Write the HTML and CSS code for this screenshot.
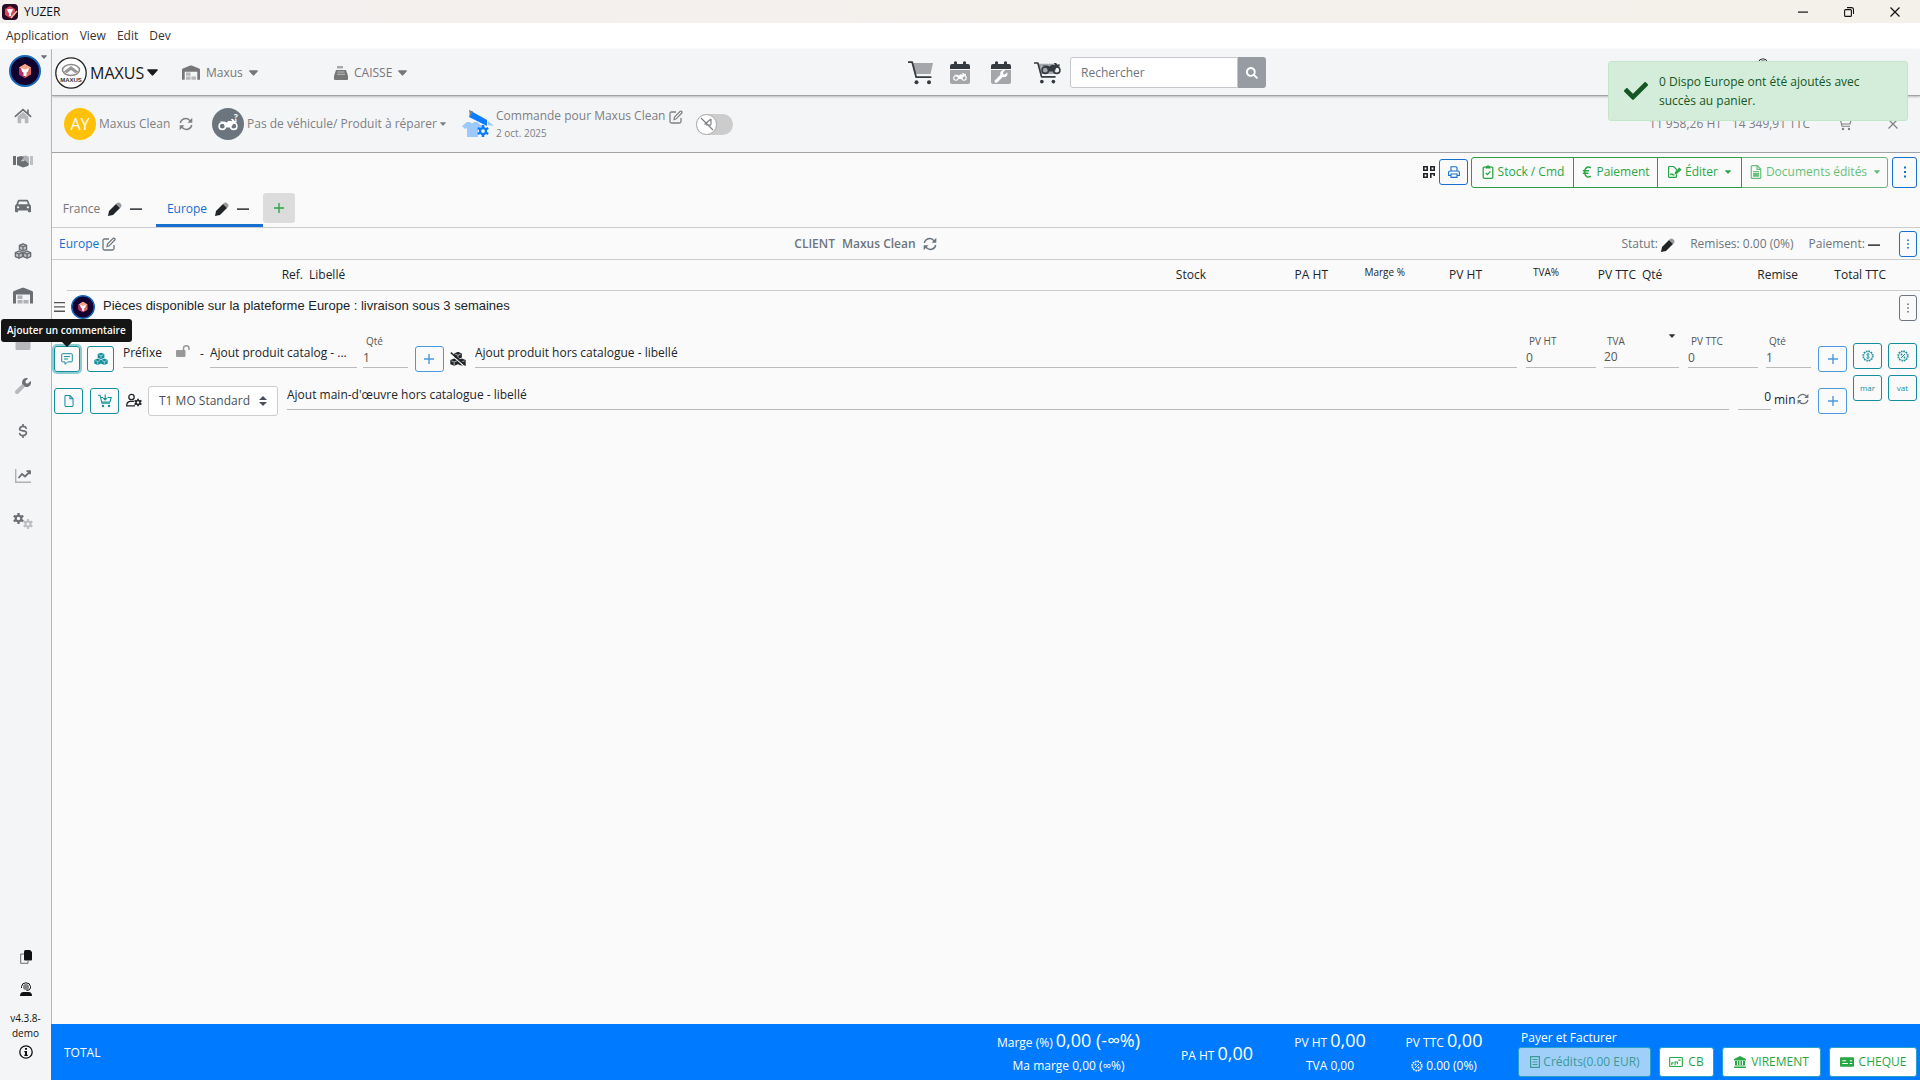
FILE: index.html
```html
<!DOCTYPE html>
<html lang="fr">
<head>
<meta charset="utf-8">
<title>YUZER</title>
<link rel="stylesheet" href="styles.css">
</head>
<body>
<svg class="sprite" aria-hidden="true">
  <symbol id="i-caret" viewBox="0 0 10 6"><path d="M.8 0h8.400q1 .4.400 1.200L5.700 5.600q-.7.600-1.400 0L.4 1.200Q-.1.400.8 0z"/></symbol>
  <symbol id="i-brand" viewBox="0 0 32 32"><circle cx="16" cy="16" r="15" fill="#12002e" stroke="#1668b8" stroke-width="2"/><path d="M16 9l6 3.500v7L16 23l-6-3.500v-7z" fill="#e0655f"/><path d="M16 9l6 3.500-6 3.500-6-3.500z" fill="#f3a48a"/><path d="M10 12.500l6 3.500v7l-6-3.500z" fill="#b03068"/><path d="M12 13l4 1.500 4-1.500-1 3.500-1.500 1V21h-3v-3.500l-1.500-1z" fill="#fff"/></symbol>
  <symbol id="i-app" viewBox="0 0 16 16"><rect width="16" height="16" rx="4" fill="#2a0a22"/><path d="M8 2l5 3v6l-5 3-5-3V5z" fill="#d8475c"/><path d="M5 5h6l-1 3-1 1v3H7V9L6 8z" fill="#fff"/><path d="M9 14l6-7" stroke="#f3c0a8" stroke-width="1.500"/></symbol>
  <symbol id="i-home" viewBox="0 0 20 18"><path d="M4 9.500l6-5 6 5V16q0 1-1 1h-3v-5H8v5H5q-1 0-1-1z" opacity=".45"/><path d="M1.500 9.500L10 2l8.500 7.500M15.500 2.500v4" fill="none" stroke="currentColor" stroke-width="1.800" stroke-linecap="round"/></symbol>
  <symbol id="i-hands" viewBox="0 0 20 14"><path d="M0 2h3v9H0z"/><path d="M17 2h3v9h-3z" opacity=".4"/><path d="M4 3l4-1 3 1-3 4q2 1 4-1l4 4-1 2-5 1.500L4 11z"/><path d="M10 2l3-.5 3 1.500v7l-4-4-3 1-1-1z" opacity=".5"/></symbol>
  <symbol id="i-car" viewBox="0 0 18 16"><path d="M4.500 1h9q1 0 1.500 1l1.500 4Q18 7 18 8v6q0 1-1 1h-1.500q-1 0-1-1v-1h-11v1q0 1-1 1H1q-1 0-1-1V8q0-1 1.500-2L3 2q.5-1 1.500-1zM4.700 3L3.500 6h11l-1.200-3z" fill-rule="evenodd"/><circle cx="3.500" cy="9.500" r="1.300" fill="#f4f5f7"/><circle cx="14.500" cy="9.500" r="1.300" fill="#f4f5f7"/></symbol>
  <symbol id="i-cubes" viewBox="0 0 20 18"><g stroke="currentColor" stroke-width="1.500" stroke-linejoin="round"><path d="M10 1l4 1.800v4.400L10 9 6 7.200V2.800zM5.500 9l4 1.800v4.400L5.500 17l-4-1.800v-4.400zM14.500 9l4 1.800v4.400l-4 1.800-4-1.800v-4.400z" fill-opacity=".35"/><path d="M6 2.800l4 1.700 4-1.700M10 4.500V9M1.500 10.800l4 1.700 4-1.700M5.500 12.500V17M10.500 10.800l4 1.700 4-1.700M14.500 12.500V17" fill="none"/></g></symbol>
  <symbol id="i-cubesolid" viewBox="0 0 20 18"><path d="M10 0l4.800 2v5.200L10 9.200l-4.800-2V2zM5.200 8.300l4.800 2v5.200l-4.800 2-4.800-2v-5.200zM14.800 8.300l4.800 2v5.200l-4.800 2-4.800-2v-5.200z"/><path d="M6.500 2.900l3.500 1.500 3.500-1.500M1.800 11.300l3.400 1.500 3.500-1.500M11.300 11.300l3.500 1.500 3.400-1.500M10 4.400v3.800M5.200 13v4M14.800 13v4" fill="none" stroke="#fafafa" stroke-width=".8"/></symbol>
  <symbol id="i-cubesoff" viewBox="0 0 20 18"><use href="#i-cubesolid"/><path d="M0 2.500L18.500 18.500" stroke="#fafafa" stroke-width="1.400"/><path d="M1 1l18.500 16" stroke="currentColor" stroke-width="1.800"/></symbol>
  <symbol id="i-ware" viewBox="0 0 20 17"><path d="M0 16V5q0-1 1-1.400L9.200.3q.8-.3 1.600 0L19 3.600q1 .4 1 1.400v11h-3V7H3v9z"/><path d="M4.500 8h5v3.500h-5zM4.500 12.500h5V16h-5zM10.500 12.500h5V16h-5z" opacity=".5"/></symbol>
  <symbol id="i-clip" viewBox="0 0 16 18"><path d="M2 2h12q1.500 0 1.500 1.500v13q0 1.500-1.500 1.500H2Q.5 18 .5 16.500v-13Q.5 2 2 2z" opacity=".45"/><path d="M5 0h6v4H5z"/></symbol>
  <symbol id="i-wrench" viewBox="0 0 512 512"><path d="M507.730 109.100c-2.240-9.030-13.540-12.090-20.120-5.510l-74.360 74.360-67.880-11.310-11.310-67.880 74.360-74.360c6.620-6.620 3.430-17.900-5.660-20.160-47.380-11.740-99.550.910-136.580 37.930-39.640 39.640-50.550 97.100-34.050 147.200L18.740 402.760c-24.990 24.990-24.990 65.510 0 90.500 24.990 24.990 65.510 24.990 90.500 0l213.210-213.210c50.120 16.710 107.470 5.680 147.370-34.220 37.070-37.070 49.700-89.320 37.910-136.730z"/></symbol>
  <symbol id="i-wrench2" viewBox="0 0 512 512"><path d="M230 191L18.740 402.760c-24.990 24.990-24.990 65.510 0 90.500s65.510 24.990 90.500 0L320 282z" opacity=".45"/><path d="M507.730 109.100c-2.240-9.030-13.540-12.090-20.120-5.510l-74.360 74.360-67.880-11.310-11.310-67.880 74.360-74.360c6.620-6.620 3.430-17.900-5.660-20.160-47.380-11.740-99.550.910-136.580 37.930-39.640 39.640-50.550 97.100-34.050 147.200l92 90c50.120 16.710 107.470 5.680 147.370-34.220 37.070-37.070 49.700-89.320 37.910-136.730z"/></symbol>
  <symbol id="i-dollar" viewBox="0 0 10 16"><path d="M8.700 4.800Q8 2.800 5 2.800T1.300 5.200 5 7.900t3.800 2.700T5 13.200 1.200 11M5 .5v2.300M5 13.200v2.300" fill="none" stroke="currentColor" stroke-width="1.900" stroke-linecap="round"/></symbol>
  <symbol id="i-chart" viewBox="0 0 16 14"><path d="M.7 0v13.300H16" fill="none" stroke="currentColor" stroke-width="1.400" opacity=".5"/><path d="M3.500 9l3.500-4 3 2.500L15 2.500M11.500 2.200H15v3" fill="none" stroke="currentColor" stroke-width="1.800"/></symbol>
  <symbol id="i-gear" viewBox="0 0 16 16"><path d="M8 4a4 4 0 1 1 0 8 4 4 0 0 1 0-8z" fill="none" stroke="currentColor" stroke-width="3"/><path d="M8 0v4M8 12v4M1.100 4l3.400 2M11.500 10l3.400 2M1.100 12l3.400-2M11.500 6l3.400-2" stroke="currentColor" stroke-width="3.400"/></symbol>
  <symbol id="i-gears" viewBox="0 0 20 16"><use href="#i-gear" width="11" height="11"/><use href="#i-gear" x="10" y="6" width="10" height="10" opacity=".4"/></symbol>
  <symbol id="i-copy" viewBox="0 0 12 14"><path d="M4 4H.7v9.300H8V11" fill="none" stroke="currentColor" stroke-width="1" opacity=".6"/><path d="M5.500 0H10l2 2v7.500q0 1-1 1H5q-1 0-1-1v-8Q4 0 5.500 0z"/></symbol>
  <symbol id="i-agent" viewBox="0 0 12 14"><path d="M0 14q0-4 3.500-4h5Q12 10 12 14z"/><circle cx="6" cy="5" r="3" opacity=".5"/><path d="M1.500 6V4.500Q2 .8 6 .8t4.500 3.700V6Q10 8.500 6.500 8.500" fill="none" stroke="currentColor" stroke-width="1"/></symbol>
  <symbol id="i-info" viewBox="0 0 14 14"><circle cx="7" cy="7" r="6.200" fill="none" stroke="currentColor" stroke-width="1.300"/><path d="M6 3h2v1.800H6zM5.300 6H8v3.700h.8V11H5.300V9.700H6V7.300h-.7z"/></symbol>
  <symbol id="i-register" viewBox="0 0 14 14"><path d="M3 0h6v2.500H3z" opacity=".6"/><path d="M2 4h10l2 6v3q0 1-1 1H1q-1 0-1-1v-3z"/><path d="M3.500 6h7M3 8.300h8" stroke="#f4f5f7" stroke-width=".8" opacity=".7"/></symbol>
  <symbol id="i-cart" viewBox="0 0 26 24"><path d="M5 2h20l-2.500 11H7.500z" opacity=".42"/><path d="M.5 1.200h3.700l4 15h14.500" fill="none" stroke="currentColor" stroke-width="1.800" stroke-linecap="round" stroke-linejoin="round"/><circle cx="8.500" cy="21.300" r="2"/><circle cx="21" cy="21.300" r="2"/></symbol>
  <symbol id="i-calw" viewBox="0 0 20 24"><path d="M0 9h20v12q0 2-2 2H2q-2 0-2-2z" opacity=".42"/><path d="M0 8V5q0-2 2-2h2V1q1.500-1.500 3 0v2h6V1q1.500-1.500 3 0v2h2q2 0 2 2v3z"/></symbol>
  <symbol id="i-moto" viewBox="0 0 28 18"><circle cx="6" cy="12" r="4.500" fill="none" stroke="currentColor" stroke-width="2.200"/><circle cx="22" cy="12" r="4.500" fill="none" stroke="currentColor" stroke-width="2.200"/><path d="M2 5.500h7l3 1.500 3-2.500 5 .5-2-3h3l2 2.500 3-1v3.500l-4 1-4 6h-7l-2-4-3-2z"/></symbol>
  <symbol id="i-search" viewBox="0 0 512 512"><path d="M505 442.700L405.300 343c-4.500-4.500-10.600-7-17-7H372c27.600-35.300 44-79.700 44-128C416 93.100 322.900 0 208 0S0 93.100 0 208s93.100 208 208 208c48.300 0 92.700-16.400 128-44v16.300c0 6.400 2.500 12.500 7 17l99.700 99.700c9.400 9.400 24.600 9.400 33.900 0l28.300-28.300c9.400-9.400 9.400-24.600.100-34zM208 336c-70.700 0-128-57.200-128-128 0-70.700 57.200-128 128-128 70.700 0 128 57.200 128 128 0 70.700-57.200 128-128 128z"/></symbol>
  <symbol id="i-sync" viewBox="0 0 14 14"><path d="M1.300 6Q2 2.200 6.500 1.500q3-.2 5 2.800M12.700 8q-.7 3.800-5.200 4.500-3 .2-5-2.800" fill="none" stroke="currentColor" stroke-width="1.500"/><path d="M13.300.8v5H8.600zM.7 13.200v-5h4.700z"/></symbol>
  <symbol id="i-edit" viewBox="0 0 14 14"><path d="M7 2H2.500Q1 2 1 3.500v8Q1 13 2.500 13h8q1.500 0 1.500-1.500V8" fill="none" stroke="currentColor" stroke-width="1.300"/><path d="M5 9.500l.5-2.500 5.700-5.700q.8-.5 1.500.2t.1 1.500L7.200 8.800z" fill="none" stroke="currentColor" stroke-width="1.200"/></symbol>
  <symbol id="i-pen" viewBox="0 0 14 14"><path d="M0 14l1-5L8 2l4 4-7 7z"/><path d="M8.700 1.300Q10.500-.4 12.500 1.500t.3 3.800L12 6 8 2z" opacity=".45"/></symbol>
  <symbol id="i-order" viewBox="0 0 32 28"><path d="M9 1l16 9v6L7 7z" fill="#0a7cff"/><path d="M7 0l4 1.500L8 7z" fill="#79838c"/><path d="M26 11l6 5-6-1z" fill="#9cc8fb"/><path d="M5 12h3q2 2.500 4 0h3l5 4-2 3-2-1v9H5v-9l-2 1-3-3z" fill="#9cc8fb"/><g color="#0a7cff"><use href="#i-gear" x="15" y="15" width="12" height="12"/></g></symbol>
  <symbol id="i-noplane" viewBox="0 0 14 14"><path d="M1 1l12 12M11 2L4.500 7.500M11 2v5.500M6 8h5" fill="none" stroke="currentColor" stroke-width="1.200"/></symbol>
  <symbol id="i-check" viewBox="0 0 512 512"><path d="M173.898 439.404l-166.400-166.400c-9.997-9.997-9.997-26.206 0-36.204l36.203-36.204c9.997-9.998 26.207-9.998 36.204 0L192 312.690 432.095 72.596c9.997-9.997 26.207-9.997 36.204 0l36.203 36.204c9.997 9.997 9.997 26.206 0 36.204l-294.400 294.401c-9.998 9.997-26.207 9.997-36.204-.001z"/></symbol>
  <symbol id="i-qr" viewBox="0 0 12 12"><path d="M.8.800h3.400v3.400H.8zM7.800.8h3.400v3.400H7.800zM.8 7.800h3.400v3.400H.8zM7.800 12V7.800h3.400V10" fill="none" stroke="currentColor" stroke-width="1.600"/></symbol>
  <symbol id="i-print" viewBox="0 0 12 12"><path d="M3 5V.7h5L9 1.700V5M2.500 9.500H.6V6.500Q.6 5 2 5h8q1.400 0 1.400 1.500v3H9.500M3 8h6v3.400H3z" fill="none" stroke="currentColor" stroke-width="1.100"/></symbol>
  <symbol id="i-clipcheck" viewBox="0 0 11 14"><path d="M3 2.200H1.800Q.7 2.200.7 3.300v9q0 1 1.100 1h7.400q1.100 0 1.100-1v-9q0-1.100-1.100-1.100H8M3.300 8l1.600 1.600 3-3.200" fill="none" stroke="currentColor" stroke-width="1.300"/><path d="M3 1h1.500q1-1.500 2 0H8v2.500H3z"/></symbol>
  <symbol id="i-euro" viewBox="0 0 9 12"><path d="M8.300 1.800Q6.500.5 4.500 1.300 2.200 2.500 2.200 6t2.300 4.700q2 .8 3.800-.5M.3 4.700h6.200M.3 7.200h5.600" fill="none" stroke="currentColor" stroke-width="1.500"/></symbol>
  <symbol id="i-sign" viewBox="0 0 15 13"><path d="M9 9v2.300q0 1-1 1H1.600q-1 0-1-1V1.600q0-1 1-1H6L9 3.500V5M2.500 9.500q1.500-2 2.500 0h2" fill="none" stroke="currentColor" stroke-width="1.300"/><path d="M7 9l.5-2.500 4.700-4.700L14.500 4 9.700 8.500z"/></symbol>
  <symbol id="i-doc" viewBox="0 0 10 13"><path d="M1.500.6H6.300L9.400 3.700v7.800q0 .9-.9.900h-7q-.9 0-.9-.9v-10q0-.9.9-.9zM6 .6V4h3.400" fill="none" stroke="currentColor" stroke-width="1.100"/><path d="M2.300 5.500h5.400v1.200H2.300zM2.300 7.500h5.400V11H2.300z"/></symbol>
  <symbol id="i-dots" viewBox="0 0 3 12"><path d="M.5.500h2v2h-2zM.5 5h2v2h-2zM.5 9.500h2v2h-2z"/></symbol>
  <symbol id="i-minus" viewBox="0 0 10 10"><path d="M0 4.500h10v1.200H0z"/></symbol>
  <symbol id="i-plus" viewBox="0 0 10 10"><path d="M4.300 0h1.400v4.300H10v1.400H5.700V10H4.300V5.700H0V4.300h4.300z"/></symbol>
  <symbol id="i-bars" viewBox="0 0 11 10"><path d="M0 0h11v1.300H0zM0 4.300h11v1.300H0zM0 8.600h11v1.300H0z"/></symbol>
  <symbol id="i-comment" viewBox="0 0 12 12"><path d="M1.500.7h9q.8 0 .8.800v6.600q0 .8-.8.800H6.800L4 11.300V8.900H1.500q-.8 0-.8-.8V1.500q0-.8.800-.8zM3 3.600h6M3 6h4" fill="none" stroke="currentColor" stroke-width="1"/></symbol>
  <symbol id="i-unlock" viewBox="0 0 14 12"><rect y="5" width="9.500" height="7" rx="1"/><path d="M7.500 5V3q.3-2.200 2.800-2.200T13 3v2" fill="none" stroke="currentColor" stroke-width="1.500"/></symbol>
  <symbol id="i-file" viewBox="0 0 10 13"><path d="M1.500.6H6L9.400 4v7.500q0 .9-.9.900h-7q-.9 0-.9-.9v-10q0-.9.900-.9zM6 .6V4h3.400" fill="none" stroke="currentColor" stroke-width="1.100"/></symbol>
  <symbol id="i-cartadd" viewBox="0 0 14 13"><path d="M0 .7h2l2 8h8M3 3h2M9.500 3h3.700L12 7.500H4M7.200 0v5M5.300 3.500L7.200 5.500 9 3.500" fill="none" stroke="currentColor" stroke-width="1.100"/><circle cx="5" cy="11.500" r="1.200"/><circle cx="11" cy="11.500" r="1.200"/></symbol>
  <symbol id="i-cartline" viewBox="0 0 14 13"><path d="M0 .7h2l2 8h8M3 2h10.200L12 6.500H4" fill="none" stroke="currentColor" stroke-width="1.100"/><circle cx="5" cy="11.500" r="1.200"/><circle cx="11" cy="11.500" r="1.200"/></symbol>
  <symbol id="i-usergear" viewBox="0 0 16 13"><circle cx="5.500" cy="3.500" r="2.700" fill="none" stroke="currentColor" stroke-width="1.300"/><path d="M8 7.800H4Q.7 8.300.7 12.300H9" fill="none" stroke="currentColor" stroke-width="1.300"/><use href="#i-gear" x="8" y="5" width="8" height="8"/></symbol>
  <symbol id="i-sort" viewBox="0 0 8 10"><path d="M4 0l4 4H0zM4 10L0 6h8z"/></symbol>
  <symbol id="i-badge" viewBox="0 0 12 12"><circle cx="6" cy="6" r="5" fill="none" stroke="currentColor" stroke-width="1.300" stroke-dasharray="1.500 1.100"/><circle cx="6" cy="6" r="4.300" fill="none" stroke="currentColor" stroke-width=".6"/></symbol>
  <symbol id="i-bdollar" viewBox="0 0 12 12"><use href="#i-badge"/><path d="M7.500 4.500Q6.500 3.500 5.300 4t0 1.700l1.500.6q1 1-.2 1.800T4.300 7.600M6 3v6" fill="none" stroke="currentColor" stroke-width=".8"/></symbol>
  <symbol id="i-bpercent" viewBox="0 0 12 12"><use href="#i-badge"/><path d="M4 8l4-4" stroke="currentColor"/><circle cx="4.500" cy="4.500" r=".9"/><circle cx="7.500" cy="7.500" r=".9"/></symbol>
  <symbol id="i-receipt" viewBox="0 0 10 12"><path d="M.6.600h8.800v10.800H.6zM2.500 3.500h5M2.500 6h5M2.500 8.500h5" fill="none" stroke="currentColor" stroke-width="1.200"/></symbol>
  <symbol id="i-card" viewBox="0 0 15 11"><path d="M1.500.7h12q.8 0 .8.800v8q0 .8-.8.800h-12q-.8 0-.8-.8v-8q0-.8.800-.8zM3 9V6.500h2M6.500 9V5.500H9V8M10 3.500h2.500" fill="none" stroke="currentColor" stroke-width="1.200"/></symbol>
  <symbol id="i-bank" viewBox="0 0 12 12"><path d="M6 0l6 3v1.500H0V3zM1 5h2v4H1zM4 5h1.500v4H4zM6.500 5H8v4H6.500zM9 5h2v4H9zM.5 9.500h11V10.500H.5zM0 11h12v1H0z"/></symbol>
  <symbol id="i-cheque" viewBox="0 0 15 10"><path fill-rule="evenodd" d="M1 0h13q1 0 1 1v8q0 1-1 1H1Q0 10 0 9V1q0-1 1-1zm1.500 3v1.200h4V3zm0 3v1.200h6V6zm8-3v1.200h2.500V3zm0 3v1.200h2.500V6z"/></symbol>
  <symbol id="i-close" viewBox="0 0 10 10"><path d="M.5.500l9 9M9.500.5l-9 9" stroke="currentColor" stroke-width="1.200"/></symbol>
  <symbol id="i-restore" viewBox="0 0 10 10"><path d="M.6 3.600q0-1 1-1h4.800q1 0 1 1v4.800q0 1-1 1H1.600q-1 0-1-1zM3 .6h4.500q2 0 2 2V7" fill="none" stroke="currentColor" stroke-width="1.100"/></symbol>
</svg>

<header class="titlebar">
  <svg class="ic s16"><use href="#i-app"/></svg>
  <span class="titlebar-name">YUZER</span>
  <div class="winctl">
    <button aria-label="Réduire"><svg class="ic s10"><use href="#i-minus"/></svg></button>
    <button aria-label="Restaurer"><svg class="ic s10"><use href="#i-restore"/></svg></button>
    <button aria-label="Fermer"><svg class="ic s10"><use href="#i-close"/></svg></button>
  </div>
</header>
<nav class="menubar">
  <a href="#">Application</a><a href="#">View</a><a href="#">Edit</a><a href="#">Dev</a>
</nav>

<div class="app">
  <aside class="sidebar">
    <button class="brand" aria-label="Menu"><svg class="ic s32"><use href="#i-brand"/></svg><svg class="ic tiny"><use href="#i-caret"/></svg></button>
    <nav class="sidenav">
      <a href="#" aria-label="Accueil"><svg class="ic s18"><use href="#i-home"/></svg></a>
      <a href="#" aria-label="Clients"><svg class="ic s20"><use href="#i-hands"/></svg></a>
      <a href="#" aria-label="Véhicules"><svg class="ic s16"><use href="#i-car"/></svg></a>
      <a href="#" aria-label="Produits"><svg class="ic s18"><use href="#i-cubes"/></svg></a>
      <a href="#" aria-label="Dépôt"><svg class="ic s20"><use href="#i-ware"/></svg></a>
      <a href="#" aria-label="Commandes"><svg class="ic s18"><use href="#i-clip"/></svg></a>
      <a href="#" aria-label="Atelier"><svg class="ic s16"><use href="#i-wrench2"/></svg></a>
      <a href="#" aria-label="Ventes"><svg class="ic s14"><use href="#i-dollar"/></svg></a>
      <a href="#" aria-label="Statistiques"><svg class="ic s16"><use href="#i-chart"/></svg></a>
      <a href="#" aria-label="Réglages"><svg class="ic s20"><use href="#i-gears"/></svg></a>
    </nav>
    <div class="sidefoot">
      <svg class="ic s14"><use href="#i-copy"/></svg>
      <svg class="ic s14"><use href="#i-agent"/></svg>
      <div class="version">v4.3.8-<br>demo</div>
      <svg class="ic s14"><use href="#i-info"/></svg>
    </div>
  </aside>

  <div class="content">
    <div class="topbar">
      <button class="shop"><svg class="ic s32" viewBox="0 0 32 32"><circle cx="16" cy="16" r="15.200" fill="#fff" stroke="#222" stroke-width="1.300"/><ellipse cx="16" cy="13" rx="8.500" ry="5.500" fill="none" stroke="#888" stroke-width="1.500"/><path d="M8 15l8-6 8 6-4 1-4-3-4 3z" fill="#999"/><text x="16" y="25" text-anchor="middle" class="maxus-word">MAXUS</text></svg><span>MAXUS</span><svg class="ic caret12"><use href="#i-caret"/></svg></button>
      <button class="place"><svg class="ic s18"><use href="#i-ware"/></svg><span>Maxus</span><svg class="ic caret9"><use href="#i-caret"/></svg></button>
      <button class="till"><svg class="ic s14"><use href="#i-register"/></svg><span>CAISSE</span><svg class="ic caret9"><use href="#i-caret"/></svg></button>
      <div class="quick">
        <svg class="ic s26"><use href="#i-cart"/></svg>
        <span class="stack"><svg class="ic cal"><use href="#i-calw"/></svg><svg class="ic mark"><use href="#i-moto"/></svg></span>
        <span class="stack"><svg class="ic cal"><use href="#i-calw"/></svg><svg class="ic mark"><use href="#i-wrench"/></svg></span>
        <span class="stack bike"><svg class="ic s24"><use href="#i-cart"/></svg><svg class="ic rider"><use href="#i-moto"/></svg></span>
        <form class="search"><input type="text" placeholder="Rechercher" aria-label="Rechercher"><button type="button" aria-label="Chercher"><svg class="ic s12"><use href="#i-search"/></svg></button></form>
      </div>
      <svg class="ic s14 support"><use href="#i-agent"/></svg>
    </div>

    <div class="orderbar">
      <div class="client"><span class="avatar">AY</span><span>Maxus Clean</span><svg class="ic s14"><use href="#i-sync"/></svg></div>
      <div class="vehicle"><span class="avatar gray"><svg class="ic s20"><use href="#i-moto"/></svg><b>?</b></span><span>Pas de véhicule/ Produit à réparer</span><svg class="ic tiny"><use href="#i-caret"/></svg></div>
      <div class="order"><svg class="ic s32"><use href="#i-order"/></svg><div><div class="order-name">Commande pour Maxus Clean <svg class="ic s14"><use href="#i-edit"/></svg></div><div class="order-date">2 oct. 2025</div></div></div>
      <label class="switch"><input type="checkbox" aria-label="Mode livraison"><span><svg class="ic s14"><use href="#i-noplane"/></svg></span></label>
      <div class="sums"><span>11 958,26 HT</span><span>14 349,91 TTC</span><svg class="ic s14"><use href="#i-cartline"/></svg><svg class="ic s10"><use href="#i-close"/></svg></div>
    </div>

    <main>
      <div class="actions">
        <svg class="ic s12 dark"><use href="#i-qr"/></svg>
        <button class="btn blue small" aria-label="Imprimer"><svg class="ic s12"><use href="#i-print"/></svg></button>
        <div class="group">
          <button class="a1"><svg class="ic s14"><use href="#i-clipcheck"/></svg>Stock / Cmd</button>
          <button class="a2"><svg class="ic s12"><use href="#i-euro"/></svg>Paiement</button>
          <button class="a3"><svg class="ic s14"><use href="#i-sign"/></svg>Éditer<svg class="ic tiny"><use href="#i-caret"/></svg></button>
          <button class="a4"><svg class="ic s14"><use href="#i-doc"/></svg>Documents édités<svg class="ic tiny"><use href="#i-caret"/></svg></button>
        </div>
        <button class="btn blue tall" aria-label="Plus"><svg class="ic s12"><use href="#i-dots"/></svg></button>
      </div>

      <div class="tabs">
        <button class="tab"><span>France</span><svg class="ic s14"><use href="#i-pen"/></svg><svg class="ic s12"><use href="#i-minus"/></svg></button>
        <button class="tab active"><span>Europe</span><svg class="ic s14"><use href="#i-pen"/></svg><svg class="ic s12"><use href="#i-minus"/></svg></button>
        <button class="addtab" aria-label="Ajouter un onglet"><svg class="ic s10"><use href="#i-plus"/></svg></button>
      </div>

      <div class="inforow">
        <div class="sheet"><a href="#">Europe</a><svg class="ic s14"><use href="#i-edit"/></svg></div>
        <div class="cust"><b>CLIENT</b><b>Maxus Clean</b><svg class="ic s14"><use href="#i-sync"/></svg></div>
        <div class="status"><span>Statut: <svg class="ic s14 dark"><use href="#i-pen"/></svg></span><span>Remises: 0.00 (0%)</span><span>Paiement: <svg class="ic s12 dark"><use href="#i-minus"/></svg></span><button class="btn blue slim" aria-label="Plus"><svg class="ic s10"><use href="#i-dots"/></svg></button></div>
      </div>

      <table class="lines">
        <thead><tr>
          <th class="c-ref">Ref.</th><th class="left">Libellé</th><th class="c-100">Stock</th><th class="c-122">PA HT</th><th class="c-77 sub">Marge %</th><th class="c-77">PV HT</th><th class="c-77 sub">TVA%</th><th class="c-77">PV TTC</th><th class="c-77 left">Qté</th><th class="c-85">Remise</th><th class="c-119">Total TTC</th>
        </tr></thead>
      </table>

      <div class="note"><svg class="ic bars"><use href="#i-bars"/></svg><svg class="ic s24"><use href="#i-brand"/></svg><p>Pièces disponible sur la plateforme Europe : livraison sous 3 semaines</p><button class="btn grayb slim" aria-label="Plus"><svg class="ic s10"><use href="#i-dots"/></svg></button></div>

      <div class="entry">
        <div class="forms">
          <div class="row">
            <span class="tipwrap"><button class="btn teal w26 focus" aria-describedby="tip"><svg class="ic s12"><use href="#i-comment"/></svg></button><span class="tip" id="tip" role="tooltip">Ajouter un commentaire</span></span>
            <button class="btn teal w27" aria-label="Produits"><svg class="ic s14"><use href="#i-cubesolid"/></svg></button>
            <input class="field f-prefix" placeholder="Préfixe" aria-label="Préfixe">
            <svg class="ic s14 lock"><use href="#i-unlock"/></svg>
            <span class="dash">-</span>
            <input class="field f-cat" placeholder="Ajout produit catalog - ..." aria-label="Ajout produit catalogue">
            <label class="num n46"><span>Qté</span><input value="1"></label>
            <button class="btn sky w29" aria-label="Ajouter"><svg class="ic s10"><use href="#i-plus"/></svg></button>
            <svg class="ic s16 dark slash"><use href="#i-cubesoff"/></svg>
            <input class="field grow" placeholder="Ajout produit hors catalogue - libellé" aria-label="Libellé">
            <label class="num n70"><span>PV HT</span><input value="0"></label>
            <label class="num n75"><span>TVA <svg class="ic tiny"><use href="#i-caret"/></svg></span><select><option>20</option></select></label>
            <label class="num n70"><span>PV TTC</span><input value="0"></label>
            <label class="num n46"><span>Qté</span><input value="1"></label>
            <button class="btn sky w29" aria-label="Ajouter"><svg class="ic s10"><use href="#i-plus"/></svg></button>
          </div>
          <div class="row two">
            <button class="btn teal w29" aria-label="Document"><svg class="ic s12"><use href="#i-file"/></svg></button>
            <button class="btn teal w29" aria-label="Panier"><svg class="ic s14"><use href="#i-cartadd"/></svg></button>
            <svg class="ic s16 dark mid"><use href="#i-usergear"/></svg>
            <span class="pick"><select aria-label="Taux"><option>T1 MO Standard</option></select><svg class="ic s10"><use href="#i-sort"/></svg></span>
            <input class="field grow" placeholder="Ajout main-d'œuvre hors catalogue - libellé" aria-label="Main-d'œuvre">
            <span class="mins"><input class="field" value="0" aria-label="Minutes"><span>min</span><svg class="ic s12"><use href="#i-sync"/></svg></span>
            <button class="btn sky w29" aria-label="Ajouter"><svg class="ic s10"><use href="#i-plus"/></svg></button>
          </div>
        </div>
        <div class="quad">
          <button class="btn teal" aria-label="Montant"><svg class="ic s12"><use href="#i-bdollar"/></svg></button>
          <button class="btn teal" aria-label="Pourcentage"><svg class="ic s12"><use href="#i-bpercent"/></svg></button>
          <button class="btn teal">mar</button>
          <button class="btn teal">vat</button>
        </div>
      </div>
    </main>

    <footer class="totals">
      <span class="total-name">TOTAL</span>
      <div class="sum t1"><div>Marge (%) <big>0,00 (-∞%)</big></div><div>Ma marge 0,00 (∞%)</div></div>
      <div class="sum t2"><div>PA HT <big>0,00</big></div></div>
      <div class="sum t3"><div>PV HT <big>0,00</big></div><div>TVA 0,00</div></div>
      <div class="sum t4"><div>PV TTC <big>0,00</big></div><div><svg class="ic s12"><use href="#i-bpercent"/></svg> 0.00 (0%)</div></div>
      <div class="pay">
        <div>Payer et Facturer</div>
        <div class="paybtns">
          <button class="p1" disabled><svg class="ic s12"><use href="#i-receipt"/></svg>Crédits(0.00 EUR)</button>
          <button class="p2"><svg class="ic s14"><use href="#i-card"/></svg>CB</button>
          <button class="p3"><svg class="ic s12"><use href="#i-bank"/></svg>VIREMENT</button>
          <button class="p4"><svg class="ic s14"><use href="#i-cheque"/></svg>CHEQUE</button>
        </div>
      </div>
    </footer>
  </div>
</div>

<div class="toast" role="status"><svg class="ic s24"><use href="#i-check"/></svg><p>0 Dispo Europe ont été ajoutés avec succès au panier.</p></div>
</body>
</html>
```
FILE: styles.css
```css
* { box-sizing: border-box; }
body {
  margin: 0;
  min-height: 100vh;
  display: flex;
  flex-direction: column;
  font: 12px/18px "Open Sans", "Noto Sans", sans-serif;
  color: #212529;
  background: #fafafa;
}
button, input, select { font: inherit; color: inherit; }
button { margin: 0; padding: 0; border: 0; background: none; display: flex; align-items: center; justify-content: center; white-space: nowrap; }
input, select { min-width: 0; padding: 0; border: 0; border-radius: 0; background: none; appearance: none; }
input::placeholder { color: inherit; opacity: 1; }
p { margin: 0; }
a { color: inherit; text-decoration: none; }
.sprite { position: absolute; width: 0; height: 0; }
.maxus-word { font: bold 6px "Liberation Sans", sans-serif; fill: #333; }

.ic { fill: currentColor; flex: none; vertical-align: middle; }
.s10 { width: 10px; height: 10px; }
.s12 { width: 12px; height: 12px; }
.s14 { width: 14px; height: 14px; }
.s16 { width: 16px; height: 16px; }
.s18 { width: 18px; height: 18px; }
.s20 { width: 20px; height: 20px; }
.s24 { width: 24px; height: 24px; }
.s26 { width: 26px; height: 24px; }
.s32 { width: 32px; height: 32px; }
.tiny { width: 6px; height: 4px; }
.caret9 { width: 9px; height: 6px; }
.caret12 { width: 11px; height: 7px; }
.dark { color: #212529; }

.titlebar { display: flex; align-items: center; height: 23px; padding-left: 2px; background: linear-gradient(90deg, #f3f0f0, #f4f1ea); color: #111; }
.titlebar-name { margin-left: 6px; }
.winctl { display: flex; margin-left: auto; padding-right: 2px; }
.winctl button { width: 46px; height: 20px; }
.menubar { display: flex; gap: 11px; height: 26px; padding: 4px 6px; background: #fff; color: #333; }

.app { flex: 1; display: flex; }
.sidebar { width: 52px; flex: none; display: flex; flex-direction: column; align-items: center; background: #f4f5f7; border-right: 1px solid #b4b6b8; color: #6b6e72; }
.brand { align-items: flex-start; padding: 6px 0 0 4px; height: 44px; }
.sidenav { display: flex; flex-direction: column; padding-right: 6px; }
.sidenav a { width: 40px; height: 45px; display: flex; align-items: center; justify-content: center; }
.sidefoot { margin-top: auto; display: flex; flex-direction: column; align-items: center; gap: 18px; padding-bottom: 21px; color: #111; }
.version { margin: -3px 0 -14px; text-align: center; font-size: 10px; line-height: 15px; }

.content { flex: 1; min-width: 0; display: flex; flex-direction: column; }
.topbar { display: flex; align-items: center; height: 47px; padding: 1px 3px 0; background: #f4f5f7; border-bottom: 1px solid #a0a2a4; box-shadow: 0 1px 2px #bbb; color: #777; position: relative; }
.shop { width: 127px; justify-content: flex-start; gap: 3px; font-size: 16px; color: #1a1a1a; }
.place, .till { justify-content: flex-start; gap: 6px; }
.place { width: 152px; }
.quick { display: flex; align-items: center; margin-left: auto; color: #343a40; }
.topbar .support { margin: -16px 147px 0 490px; color: #333; }
.quick .stack { margin-left: 21px; }
.quick > .stack:nth-child(2) { margin-left: 16px; }
.stack { display: grid; place-items: center; }
.stack > * { grid-area: 1 / 1; }
.cal { width: 20px; height: 24px; }
.mark { width: 14px; height: 13px; margin-top: 7px; color: #fff; }
.rider { width: 20px; height: 14px; margin: -9px -10px 0 0; }
.bike { width: 28px; }
.search { display: flex; height: 31px; margin-left: 10px; }
.search input { width: 168px; padding-left: 10px; background: #fff; border: 1px solid #c4c8cc; border-radius: 3px 0 0 3px; color: #6c757d; }
.search button { width: 28px; background: #969ca2; color: #fff; border-radius: 0 3px 3px 0; }

.orderbar { display: flex; align-items: center; height: 57px; padding: 0 22px 0 12px; background: #f4f5f7; border-bottom: 1px solid #a0a2a4; box-shadow: 0 1px 2px #bbb; color: #7d8083; }
.avatar { width: 32px; height: 32px; border-radius: 50%; background: #ffc107; color: #fff; font-size: 16px; display: flex; align-items: center; justify-content: center; }
.avatar.gray { background: #6c757d; }
.avatar b { font-size: 8px; margin: -14px 0 0 -4px; }
.client, .vehicle, .order { display: flex; align-items: center; gap: 3px; white-space: nowrap; }
.client { width: 148px; }
.client .ic { margin-left: 6px; }
.vehicle { width: 250px; }
.order { width: 234px; gap: 2px; }
.order-name { line-height: 18px; }
.order-date { font-size: 10px; line-height: 16px; }
.switch { width: 37px; height: 21px; border-radius: 11px; background: #ccc; }
.switch input { position: absolute; opacity: 0; }
.switch span { display: flex; align-items: center; justify-content: center; width: 21px; height: 21px; border-radius: 50%; background: #fff; border: 1px solid #aaa; }
.sums { display: flex; align-items: center; gap: 10px; margin-left: auto; }
.sums .s14 { margin-left: 18px; }
.sums .s10 { margin-left: 26px; }

main { flex: 1; background: #fafafa; }
.actions { display: flex; align-items: center; justify-content: flex-end; gap: 4px; height: 36px; padding: 2px 3px 0 0; }
.btn { border: 1px solid; border-radius: 3px; height: 26px; }
.blue { color: #1670d0; }
.grayb { color: #6c757d; }
.teal { color: #138f9b; }
.sky { color: #4a98e0; }
.small { width: 29px; }
.tall { width: 25px; height: 31px; }
.slim { width: 18px; }
.group { display: flex; height: 31px; color: #28a745; }
.group button { gap: 3px; border: 1px solid #2b9a49; margin-left: -1px; }
.group .tiny { margin-left: 4px; }
.a1 { width: 103px; border-radius: 3px 0 0 3px; }
.a2 { width: 85px; }
.a3 { width: 85px; }
.a4 { width: 147px; border-radius: 0 3px 3px 0; opacity: .7; }

.tabs { display: flex; height: 39px; border-bottom: 1px solid #ccc; align-items: flex-end; }
.tab { height: 38px; width: 104px; padding: 4px 3px 0 0; gap: 8px; color: #212529; border-bottom: 3px solid transparent; }
.tab span { color: #777; }
.tab.active { width: 107px; border-color: #1670d0; }
.tab.active span { color: #1670d0; }
.addtab { width: 32px; height: 30px; margin-bottom: 4px; background: #dcdcdc; border-radius: 3px; color: #28a745; }

.inforow { display: flex; align-items: center; height: 32px; padding: 1px 3px 0 7px; border-bottom: 1px solid #ccc; color: #6c757d; white-space: nowrap; }
.sheet, .cust, .status { display: flex; align-items: center; }
.sheet { flex: 3 1 0; gap: 3px; }
.sheet a { color: #1670d0; }
.cust { gap: 7px; }
.cust b { font-weight: 600; }
.status { flex: 4 1 0; justify-content: flex-end; gap: 15px; }
.status .slim { margin-left: 4px; }

.lines { width: calc(100% - 15px); margin-left: 15px; table-layout: fixed; border-collapse: collapse; border-bottom: 1px solid #ccc; }
.lines th { height: 30px; padding: 0 3px; text-align: right; font-weight: 400; white-space: nowrap; }
.lines .left { text-align: left; }
.lines .sub { font-size: 10px; line-height: 12px; padding-bottom: 6px; }
.c-ref { width: 239px; }
.c-100 { width: 100px; }
.c-122 { width: 122px; }
.c-77 { width: 77px; }
.c-85 { width: 85px; }
.lines .c-119 { width: 119px; padding-right: 34px; }

.note { display: flex; align-items: flex-start; height: 41px; padding: 4px 3px 0 2px; }
.note p { margin: 2px 0 0 8px; flex: 1; font: 13px/18px "Liberation Sans", Arial, sans-serif; }
.bars { width: 11px; height: 10px; margin: 7px 6px 0 0; color: #555; }

.entry { display: flex; gap: 6px; padding: 0 3px 0 2px; }
.forms { flex: 1; min-width: 0; }
.row { display: flex; align-items: flex-end; height: 40px; }
.row.two { height: 42px; }
.w26 { width: 26px; }
.w27 { width: 27px; margin-left: 7px; }
.w29 { width: 29px; }
.focus { box-shadow: 0 0 0 2px #8ccbd2; }
.field { height: 26px; margin-bottom: 4px; padding-bottom: 3px; border-bottom: 1px solid #bbb; }
.f-prefix { width: 45px; margin-left: 9px; }
.lock { margin: 0 10px 14px 8px; color: #999; }
.dash { margin: 0 6px 9px 0; }
.f-cat { width: 147px; margin-right: 6px; }
.num { display: flex; flex-direction: column; margin-bottom: 4px; color: #555; }
.num span { padding-left: 3px; font-size: 10px; line-height: 14px; display: flex; justify-content: space-between; }
.num span .ic { margin-right: 4px; color: #333; }
.num input, .num select { height: 20px; border-bottom: 1px solid #bbb; }
.n46 { width: 45px; margin-right: 7px; }
.n70 { width: 70px; margin: 0 8px 4px 9px; }
.n75 { width: 75px; }
.slash { margin: 0 9px 5px 6px; }
.grow { flex: 1; }
.mid { margin: 0 6px 6px 7px; }
.two .w29 + .w29 { margin-left: 7px; }
.pick { display: flex; align-items: center; width: 130px; height: 30px; margin: 0 9px -2px 0; padding-right: 9px; background: #fff; border: 1px solid #ccc; border-radius: 3px; color: #495057; }
.pick select { flex: 1; padding-left: 10px; }
.mins { display: flex; align-items: flex-end; width: 80px; margin: 0 0 0 9px; }
.mins .field { width: 33px; padding-bottom: 0; text-align: right; }
.mins span { margin: 0 1px 5px 3px; }
.mins .ic { margin-bottom: 9px; color: #6c757d; }
.quad { display: grid; grid-template-columns: 29px 29px; gap: 6px; align-content: start; padding-top: 11px; font-size: 8px; }

.tipwrap { position: relative; }
.tip { position: absolute; left: -53px; bottom: 30px; z-index: 5; padding: 2px 6px 3px; border-radius: 3px; background: #151515; color: #fff; font-size: 10px; font-weight: 600; white-space: nowrap; }
.tip::after { content: ""; position: absolute; left: 61px; top: 100%; border: 5px solid transparent; border-top-color: #151515; border-bottom: 0; }

.totals { display: flex; align-items: center; height: 56px; margin-left: -1px; padding: 1px 3px 0 13px; background: #007bff; color: #fff; white-space: nowrap; }
.total-name { margin-right: auto; }
.sum { text-align: center; }
.sum div { height: 26px; line-height: 26px; }
.sum big { font-size: 18px; }
.t1 { width: 153px; margin-right: 32px; }
.t2 { width: 80px; margin-right: 36px; }
.t3 { width: 74px; margin-right: 38px; }
.t4 { width: 78px; margin-right: 35px; }
.pay > div:first-child { padding-left: 3px; }
.paybtns { display: flex; gap: 8px; }
.paybtns button { height: 30px; gap: 5px; border: 1px solid #28a0c8; border-radius: 3px; background: #fff; color: #28a745; }
.paybtns .p1 { background: #a0d0fa; color: #3a9a94; width: 133px; gap: 2px; }
.p2 { width: 55px; }
.p3 { width: 99px; }
.p4 { width: 88px; }

.toast { position: fixed; top: 61px; right: 12px; width: 300px; display: flex; align-items: center; gap: 11px; padding: 10px 15px; background: #d4edda; border: 1px solid #c3e6cb; border-radius: 3px; color: #155724; line-height: 19px; z-index: 6; }
```
